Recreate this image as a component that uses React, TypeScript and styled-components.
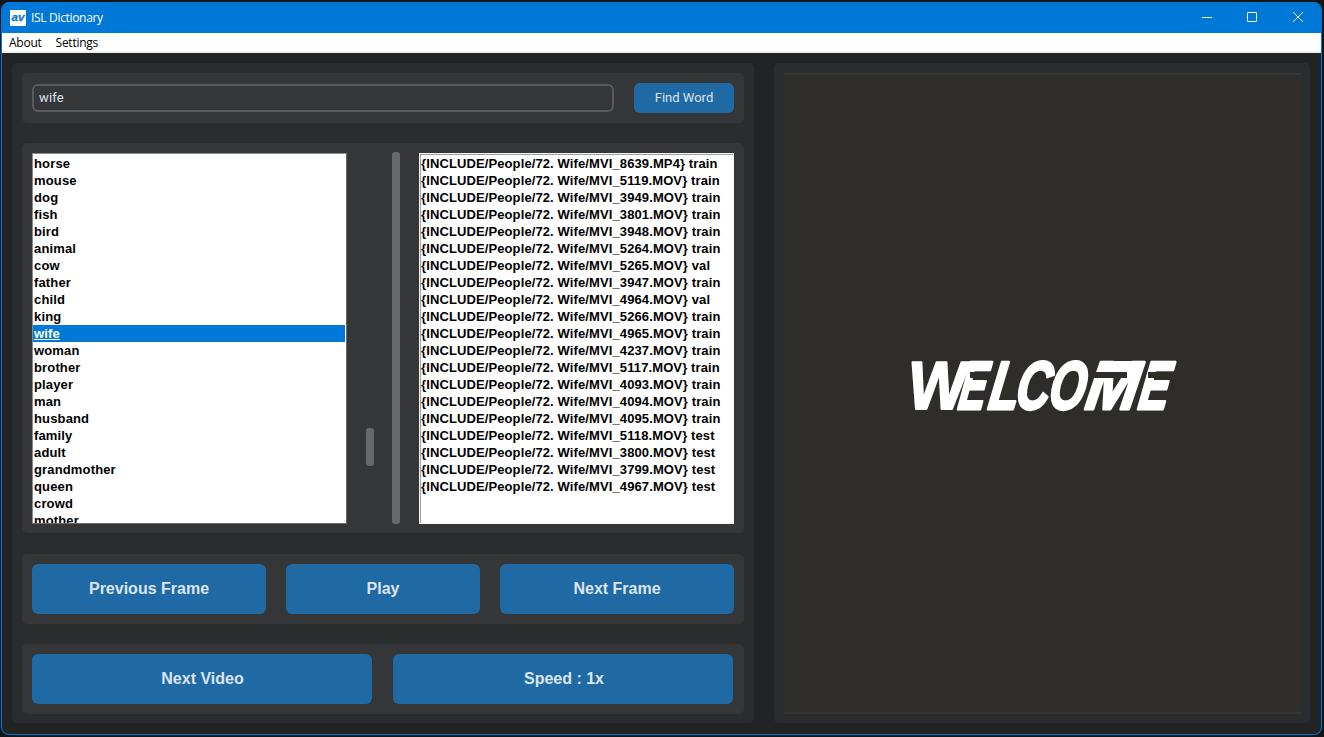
import React, { useState } from "react";
import styled, { createGlobalStyle } from "styled-components";

const GlobalStyle = createGlobalStyle`
  * { box-sizing: border-box; }
  html, body { margin: 0; padding: 0; background: #151515; }
  body { width: 1324px; height: 737px; overflow: hidden; }
`;

const Desktop = styled.div`
  height: 737px;
  padding: 2px 2px 2px 1px;
  background: #151515;
`;
const Window = styled.div`
  height: 733px;
  display: flex;
  flex-direction: column;
  border: 1px solid #0078d7;
  border-top: 0;
  border-radius: 8px;
  overflow: hidden;
  background: #212325;
`;
const TitleBar = styled.header`
  flex: 0 0 31px;
  display: flex;
  align-items: center;
  padding-left: 8px;
  background: #0078d7;
  color: #fff;
  font: 12px/16px "Open Sans", "Noto Sans", sans-serif;
`;
const AppIcon = styled.svg`
  width: 16px;
  height: 16px;
  margin-right: 5px;
  background: #fff;
`;
const Title = styled.span`
  flex: 1;
  letter-spacing: -0.32px;
`;
const Controls = styled.div`
  display: flex;
`;
const Control = styled.button`
  width: 46px;
  height: 31px;
  padding: 0 0 1px;
  display: grid;
  place-items: center;
  border: 0;
  background: none;
  svg { display: block; }
`;
const MenuBar = styled.nav`
  flex: 0 0 20px;
  display: flex;
  gap: 14px;
  padding: 2px 7px 0;
  background: #fff;
  border-bottom: 2px solid #f0f0f0;
  color: #000;
  font: 12px/16px "Open Sans", "Noto Sans", sans-serif;
  letter-spacing: -0.25px;
`;
const Body = styled.main`
  flex: 1;
  display: flex;
  gap: 20px;
  padding: 10px 11px 11px 10px;
`;
const Panel = styled.section<{ $w: number }>`
  width: ${(p) => p.$w}px;
  flex: none;
  height: 660px;
  padding: 10px;
  border-radius: 5px;
  background: #2a2d2e;
`;
const Group = styled.div<{ $h: number; $after?: number; $gap?: number }>`
  display: flex;
  gap: ${(p) => p.$gap ?? 20}px;
  height: ${(p) => p.$h}px;
  margin-bottom: ${(p) => p.$after ?? 20}px;
  padding: 10px;
  border-radius: 5px;
  background: #343638;
`;
const SearchInput = styled.input`
  width: 582px;
  height: 28px;
  margin-top: 1px;
  padding: 0 5px 1px;
  border: 2px solid #565b5e;
  border-radius: 6px;
  outline: 0;
  background: #343638;
  color: #dce4ee;
  font: 13px Roboto, sans-serif;
  letter-spacing: 0.15px;
`;
const Button = styled.button<{ $w: number; $small?: boolean; $indent?: number }>`
  width: ${(p) => p.$w}px;
  height: ${(p) => (p.$small ? 30 : 50)}px;
  padding: 0 0 1px ${(p) => p.$indent ?? 0}px;
  border: 0;
  border-radius: 6px;
  background: #1f6aa5;
  color: #dce4ee;
  font: ${(p) => (p.$small ? "13px Roboto, sans-serif" : 'bold 16px "Liberation Sans", sans-serif')};
`;
const ListBox = styled.ul<{ $focused?: boolean }>`
  width: 315px;
  height: 371px;
  margin: 0;
  padding: 1px ${(p) => (p.$focused ? 1 : 0)}px 0 0;
  overflow: hidden;
  list-style: none;
  border: 1px solid ${(p) => (p.$focused ? "#696969" : "#f4f4f4")};
  ${(p) => (p.$focused ? "border-top-color: #8a8a8a; border-left-color: #8a8a8a;" : "box-shadow: inset 1px 1px #a0a0a0;")}
  background: #fff;
  color: #000;
  font: bold 13px/17px "Liberation Sans", Arial, sans-serif;
  letter-spacing: ${(p) => (p.$focused ? 0.15 : 0.11)}px;
`;
const Item = styled.li<{ $active?: boolean }>`
  height: 17px;
  padding-left: 1px;
  white-space: nowrap;
  color: ${(p) => (p.$active ? "#fff" : "#000")};
  background: ${(p) => (p.$active ? "#0078d7" : "transparent")};
  text-decoration: ${(p) => (p.$active ? "underline" : "none")};
`;
const Track = styled.div<{ $left: number; $right: number; $top: number }>`
  width: 8px;
  height: 372px;
  margin: -1px ${(p) => p.$right}px 0 ${(p) => p.$left}px;
  padding-top: ${(p) => p.$top}px;
`;
const Thumb = styled.div<{ $h: number }>`
  height: ${(p) => p.$h}px;
  border-radius: 3px;
  background: #696969;
`;
const Video = styled.div`
  width: 517px;
  height: 641px;
  display: flex;
  align-items: center;
  border: solid #343638;
  border-width: 2px 0;
  background: #2f2d29;
`;
const Wordmark = styled.svg`
  display: block;
  margin: -17px 0 0 118px;
  overflow: visible;
  font: italic bold 68px "Liberation Sans", sans-serif;
`;

const words = "horse mouse dog fish bird animal cow father child king wife woman brother player man husband family adult grandmother queen crowd mother".split(" ");
const clips = [
  ["8639.MP4", "train"], ["5119.MOV", "train"], ["3949.MOV", "train"], ["3801.MOV", "train"],
  ["3948.MOV", "train"], ["5264.MOV", "train"], ["5265.MOV", "val"], ["3947.MOV", "train"],
  ["4964.MOV", "val"], ["5266.MOV", "train"], ["4965.MOV", "train"], ["4237.MOV", "train"],
  ["5117.MOV", "train"], ["4093.MOV", "train"], ["4094.MOV", "train"], ["4095.MOV", "train"],
  ["5118.MOV", "test"], ["3800.MOV", "test"], ["3799.MOV", "test"], ["4967.MOV", "test"],
];
// Letter, left position and drawn width of the wordmark
const letters: [string, number, number][] = [
  ["W", 3, 58], ["E", 55, 27], ["L", 85, 30], ["C", 112, 34], ["O", 145, 36], ["M", 182, 52], ["E", 235, 30],
];

export default function App() {
  const [query, setQuery] = useState("wife");
  return (
    <Desktop>
      <GlobalStyle />
      <Window>
        <TitleBar>
          <AppIcon viewBox="0 0 16 16">
            <text x="1.5" y="11" fontFamily="Liberation Sans, sans-serif" fontSize="10" fontWeight="bold" fontStyle="italic" fill="#1c78b8" stroke="#1c78b8" strokeWidth=".3" textLength="13" lengthAdjust="spacingAndGlyphs">av</text>
          </AppIcon>
          <Title>ISL Dictionary</Title>
          <Controls>
            <Control aria-label="Minimize"><svg width="12" height="10"><path d="M2 5.5h10" stroke="#fff" /></svg></Control>
            <Control aria-label="Maximize"><svg width="10" height="10"><rect x=".5" y=".5" width="9" height="9" rx=".5" fill="none" stroke="#fff" /></svg></Control>
            <Control aria-label="Close"><svg width="10" height="10"><path d="M0 0l10 10M10 0L0 10" stroke="#fff" /></svg></Control>
          </Controls>
        </TitleBar>
        <MenuBar><span>About</span><span>Settings</span></MenuBar>
        <Body>
          <Panel $w={742}>
            <Group $h={50}>
              <SearchInput value={query} onChange={(e) => setQuery(e.target.value)} />
              <Button $w={100} $small>Find Word</Button>
            </Group>
            <Group $h={390} $gap={0} $after={21}>
              <ListBox $focused>
                {words.map((w) => <Item key={w} $active={w === "wife"}>{w}</Item>)}
              </ListBox>
              <Track $left={19} $right={18} $top={276}><Thumb $h={38} /></Track>
              <Track $left={0} $right={19} $top={0}><Thumb $h={372} /></Track>
              <ListBox>
                {clips.map(([file, split]) => (
                  <Item key={file}>{`{INCLUDE/People/72. Wife/MVI_${file}} ${split}`}</Item>
                ))}
              </ListBox>
            </Group>
            <Group $h={70}>
              <Button $w={234}>Previous Frame</Button>
              <Button $w={194}>Play</Button>
              <Button $w={234}>Next Frame</Button>
            </Group>
            <Group $h={70} $gap={21} $after={0}>
              <Button $w={340} $indent={1}>Next Video</Button>
              <Button $w={340} $indent={2}>Speed : 1x</Button>
            </Group>
          </Panel>
          <Panel $w={536}>
            <Video>
              <Wordmark width="290" height="64" viewBox="0 0 290 64">
                <text y="55.5" transform="translate(8.8 0) skewX(-9)" fill="#fff" stroke="#fff" strokeLinejoin="round">
                  {letters.map(([ch, x, w], i) => (
                    <tspan key={i} x={x} textLength={w} lengthAdjust="spacingAndGlyphs" fontStyle={ch === "W" ? "normal" : "italic"} strokeWidth={ch === "W" ? 2 : 3}>{ch}</tspan>
                  ))}
                </text>
                <path d="M200 13.5h40" stroke="#fff" strokeWidth="11" />
                <path d="M68 22h23M190 22h35M246 22h29" stroke="#2f2d29" strokeWidth="6" />
              </Wordmark>
            </Video>
          </Panel>
        </Body>
      </Window>
    </Desktop>
  );
}
